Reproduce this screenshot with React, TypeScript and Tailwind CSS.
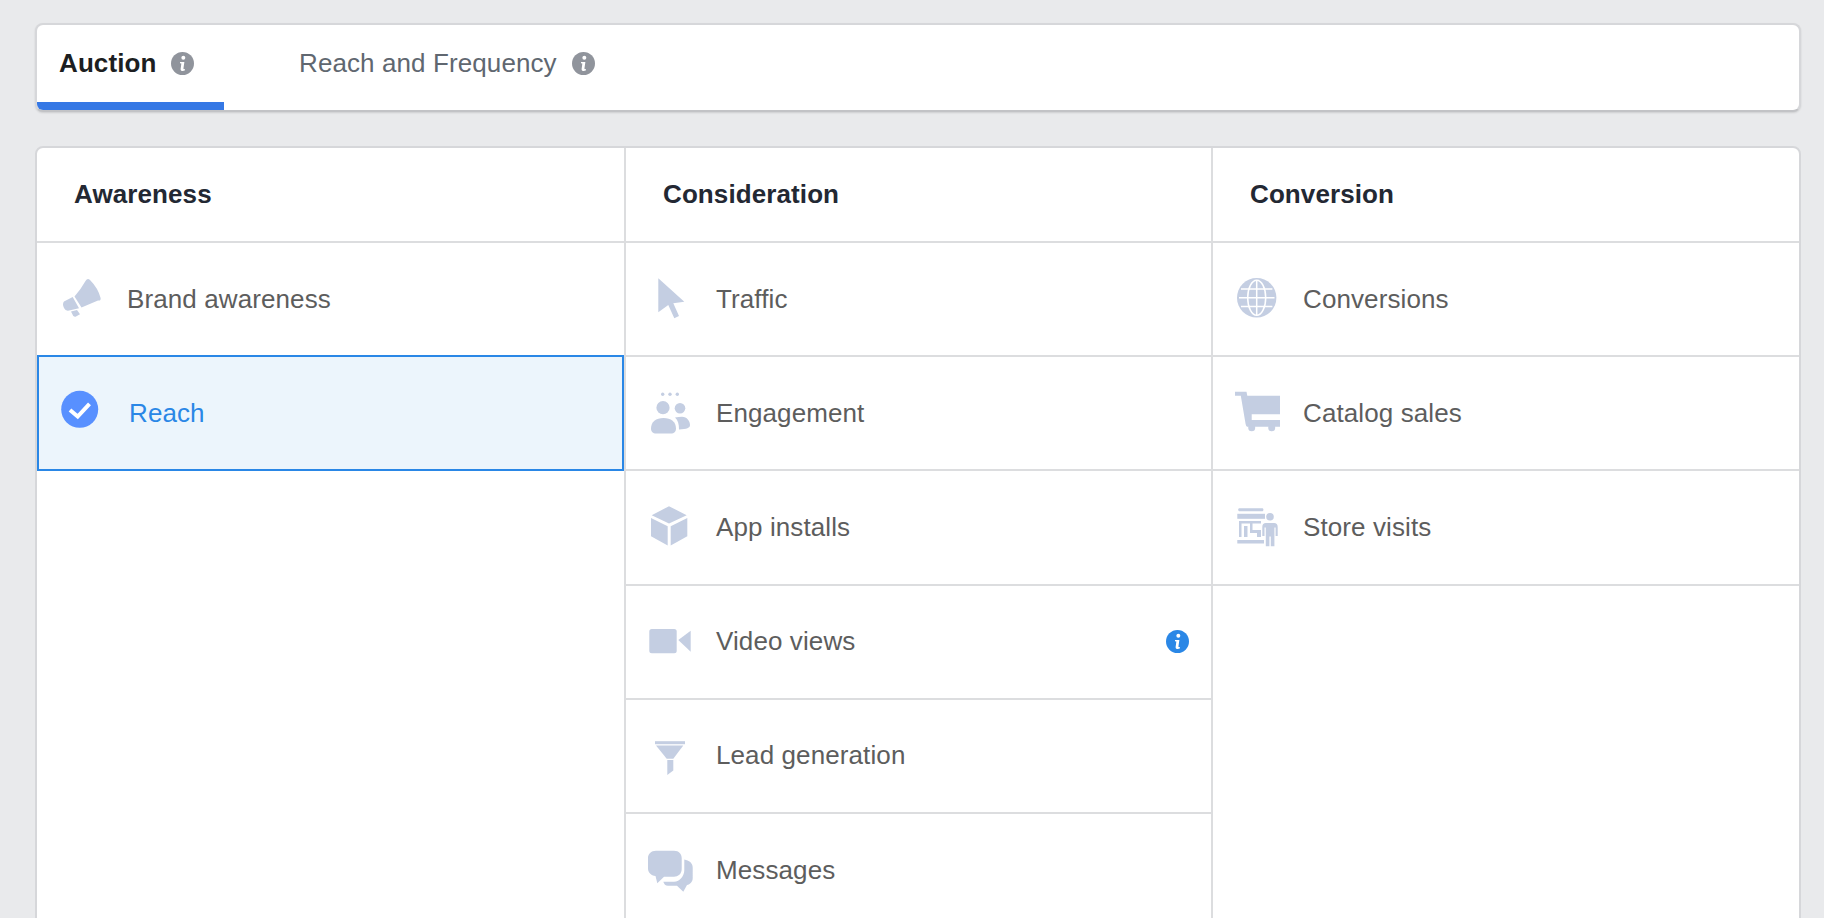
import type { ReactNode } from "react";

function Glyph({ children }: { children: ReactNode }) {
  return (
    <svg viewBox="0 0 48 48" className="w-12 h-12 shrink-0 text-[#c4cee2]" fill="currentColor">
      {children}
    </svg>
  );
}

function InfoDot({ className }: { className: string }) {
  return (
    <svg viewBox="0 0 22 22" className={`w-[23px] h-[23px] shrink-0 ${className}`}>
      <circle cx="11" cy="11" r="11" fill="currentColor" />
      <circle cx="11.8" cy="5.6" r="1.9" fill="#fff" />
      <path d="M8.6 9.6h4.2l-.9 6.2c0 .7.6.8 1.5.4v1.2c-1.6 1-4.4 1.2-4.2-1.2l.7-5.2-1.3-.2z" fill="#fff" />
    </svg>
  );
}

const megaphone = (
  <Glyph>
    <path d="M28.5 6Q30.5 2.5 33 5Q41 13 43.6 23Q44 26 41 25.5L24.5 32.5L17.5 21.5Q24 14 28.5 6Z" />
    <path d="M7 26.5L15.7 22L22 33.2L11 35.8Q8.5 36 7 33Q5 29 7 26.5Z" />
    <path d="M14 36.5L20 35L23 39.2L18.5 41.8Q17 42 16 40.5Z" />
  </Glyph>
);

const checked = (
  <svg viewBox="0 0 48 48" className="w-12 h-12 shrink-0">
    <circle cx="23.7" cy="20.3" r="18.5" fill="#5890ff" />
    <path d="M14 21l7.7 6.5L33.5 14.8" fill="none" stroke="#fff" strokeWidth="4" />
  </svg>
);

const cursor = (
  <Glyph>
    <path d="M12.3 3.3L38.3 26.7L27.3 28.3L33 41L28.3 43.3L22.3 30L12.3 37.3Z" />
  </Glyph>
);

const people = (
  <Glyph>
    <circle cx="16.7" cy="5.3" r="1.7" />
    <circle cx="24" cy="5.3" r="1.7" />
    <circle cx="31.3" cy="5.3" r="1.7" />
    <circle cx="17" cy="18.7" r="6.6" />
    <circle cx="34" cy="19.3" r="5.3" />
    <path d="M5 39.5C5 33 10 29 17.5 29C25 29 30 33 30 39.5C30 43 28 44.5 25 44.5H10C7 44.5 5 43 5 39.5Z" />
    <path d="M29 28.5Q33 27.7 36 27.7C41 27.7 44 32 44 36C44 39 41 40 33 40.5C33 35 32 31 29 28.5Z" />
  </Glyph>
);

const box = (
  <Glyph>
    <path d="M23 3.2L40.7 12.2L23 20.5L5.7 12.2Z" />
    <path d="M5 15L21.7 23.2V42.5L5 33.2Z" />
    <path d="M24.7 23.2L41.3 15V33.2L24.7 42.5Z" />
  </Glyph>
);

const camera = (
  <Glyph>
    <rect x="3.3" y="11" width="27.4" height="24.3" rx="2.5" />
    <path d="M32.3 22L44.7 12.7V33.7Z" />
  </Glyph>
);

const funnel = (
  <Glyph>
    <rect x="9" y="9.2" width="30" height="3" />
    <path d="M10 13.5H37.3L27.3 26.8H20.7Z" />
    <path d="M21.3 28H27.3V38.5L21.3 43Z" />
  </Glyph>
);

const bubbles = (
  <Glyph>
    <path d="M10 4.7H28C33 4.7 35.7 8 35.7 12V23C35.7 28 32 30.7 28 30.7H18L11.3 37.3L9.5 30C5 29.5 2 26.5 2 22.5V12C2 8 5 4.7 10 4.7Z" />
    <path d="M38.3 13.6C43 14.5 46.7 17 46.7 21.5V32C46.7 36 44 38.5 41 39L37.3 45.7L31 39.8H22C19.5 39.8 18 38 17.3 35.7H28C34 35.7 38.3 30 38.3 24Z" />
  </Glyph>
);

const globe = (
  <Glyph>
    <circle cx="23.7" cy="22.7" r="19.7" />
    <g fill="none" stroke="#fff" strokeWidth="1.5">
      <ellipse cx="23.7" cy="22.7" rx="9" ry="17.5" />
      <path d="M23.7 5V40.5M6 22.7H41.5M8 14H39.4M8 31.4H39.4" />
    </g>
  </Glyph>
);

const cart = (
  <Glyph>
    <path d="M2 2.7H13.5L14.3 6.7H47V25.3H18.7V31H47V37.7H14Q13 37 12.6 35L7.8 6.7H2Z" />
    <circle cx="18.7" cy="38.7" r="3.5" />
    <circle cx="38.7" cy="38.7" r="3.5" />
  </Glyph>
);

const store = (
  <Glyph>
    <rect x="5.3" y="5.2" width="25" height="3" rx="1" />
    <rect x="4.3" y="10.8" width="27.7" height="5" />
    <path d="M6 18H28V20.5H19.5V27H28V34H24V30H17V20.5H8.5V34H6Z" />
    <path d="M11 23H14.5V34H11Z" />
    <rect x="4.3" y="37" width="26.7" height="3.5" />
    <circle cx="37" cy="13.8" r="3.8" />
    <path d="M29.3 33V24Q29.3 20 33 20H41Q44.7 20 44.7 24V33H42.6V24.5H41.4V43.2H37.8V33.5H36.4V43.2H32.8V24.5H31.5V33Z" />
  </Glyph>
);

interface Objective {
  label: string;
  icon: ReactNode;
  selected?: boolean;
  info?: boolean;
}

const columns: { title: string; items: Objective[] }[] = [
  {
    title: "Awareness",
    items: [
      { label: "Brand awareness", icon: megaphone },
      { label: "Reach", icon: checked, selected: true },
    ],
  },
  {
    title: "Consideration",
    items: [
      { label: "Traffic", icon: cursor },
      { label: "Engagement", icon: people },
      { label: "App installs", icon: box },
      { label: "Video views", icon: camera, info: true },
      { label: "Lead generation", icon: funnel },
      { label: "Messages", icon: bubbles },
    ],
  },
  {
    title: "Conversion",
    items: [
      { label: "Conversions", icon: globe },
      { label: "Catalog sales", icon: cart },
      { label: "Store visits", icon: store },
    ],
  },
];

function Row({ item }: { item: Objective }) {
  if (item.selected) {
    return (
      <div className="h-[116.2px] -mt-[2px] flex items-center pl-[17px] gap-[25px] border-2 border-[#2a87e6] bg-[#ecf5fc] text-[#2a87e6]">
        {item.icon}
        <span>{item.label}</span>
      </div>
    );
  }
  return (
    <div className="h-[114.2px] flex items-center pl-5 pr-[22px] gap-[22px] border-b-2 border-[#dcdddf] text-[#5d5d5d]">
      {item.icon}
      <span className="flex-1">{item.label}</span>
      {item.info && <InfoDot className="text-[#2a87e6]" />}
    </div>
  );
}

export default function App() {
  return (
    <div className="h-[918px] overflow-hidden bg-[#e9eaec] pl-[35px] pr-[23px] pt-[23px] font-['Liberation_Sans',Arial,sans-serif] text-[26px] tracking-[0.1px]">
      <div className="h-[89px] flex bg-white rounded-lg overflow-hidden border-2 border-[#d6d7da] border-b-[#c2c3c6] shadow-[0_1px_2px_rgba(0,0,0,0.12)]">
        <div className="w-[187px] flex items-center gap-[15px] pl-[22px] border-b-[8px] border-[#3578e5] font-bold text-[#1c1e21]">
          Auction
          <InfoDot className="text-[#90949c]" />
        </div>
        <div className="ml-[75px] flex items-center gap-[15px] border-b-[8px] border-transparent text-[#606770]">
          Reach and Frequency
          <InfoDot className="text-[#90949c]" />
        </div>
      </div>

      <div className="mt-[34px] h-[900px] grid grid-cols-[589px_587px_1fr] bg-white rounded-t-lg overflow-hidden border-2 border-[#d6d7da]">
        {columns.map((col, i) => (
          <div key={col.title} className={i < 2 ? "border-r-2 border-[#dcdddf]" : ""}>
            <div className="h-[95px] flex items-center pl-[37px] border-b-2 border-[#dcdddf] font-bold text-[#232833]">
              {col.title}
            </div>
            {col.items.map((item) => (
              <Row key={item.label} item={item} />
            ))}
          </div>
        ))}
      </div>
    </div>
  );
}
